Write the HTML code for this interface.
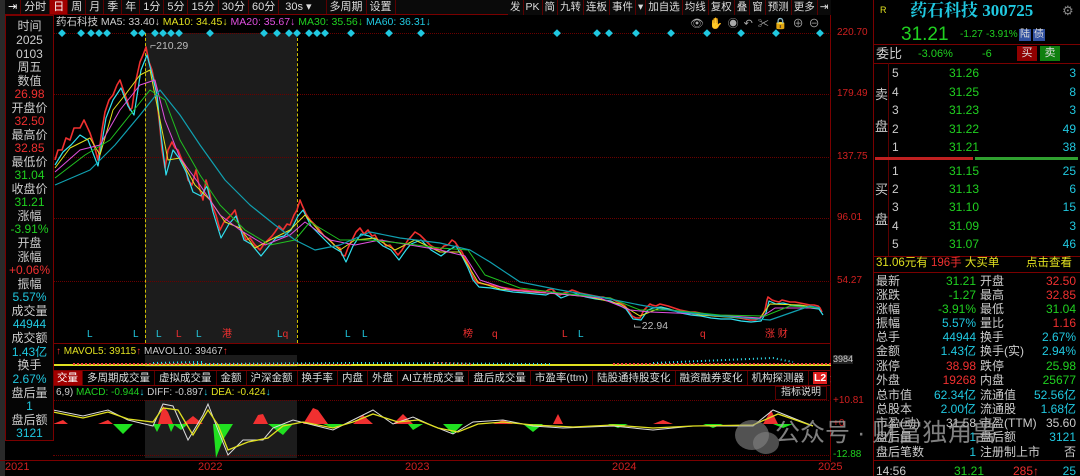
<!DOCTYPE html>
<html><head><meta charset="utf-8"><style>
*{margin:0;padding:0;box-sizing:border-box}
body{width:1080px;height:476px;background:#000;overflow:hidden;position:relative;font-family:"Liberation Sans","Noto Sans CJK SC",sans-serif;font-size:11px;color:#ccc}
.a{position:absolute;white-space:nowrap;line-height:1}
.tb{overflow:hidden}
.tb span{display:inline-block;height:15px;line-height:15px;padding:0 3px;border-right:1px solid #5a0000;color:#ddd;font-size:11px}
.tb2 span{padding:0 2px;font-size:10.5px}
.lp{position:absolute;left:5px;top:15px;width:49px;height:426px;border:1px solid #7a0000;background:#050505}
.lp div{position:absolute;left:0;width:47px;text-align:center;font-size:12px;line-height:1}
.g{color:#20d020}.r{color:#f03030}.c{color:#20c8e0}.w{color:#ccc}.y{color:#e0e020}.m{color:#e050e0}
.ax{color:#d02020;font-size:10px}
.tabs{overflow:hidden}
.tabs span{display:inline-block;height:15px;line-height:15px;padding:0 4px;border-right:1px solid #5a0000;color:#ddd;font-size:10.5px}
.rp span{position:absolute;line-height:1;font-size:12px;white-space:nowrap}
.dm{position:absolute;top:30px;font-size:8px;color:#20c8e0;line-height:1}
</style></head><body>
<div class="a" style="left:0;top:0;width:5px;height:476px;background:#2a2a2a"></div>
<div class="a tb" style="left:5px;top:0;height:15px;width:826px;border-bottom:1px solid #7a0000;background:#0a0a0a">
<span style="color:#fff">⇥</span><span>分时</span><span style="background:#a00000;color:#fff">日</span><span>周</span><span>月</span><span>季</span><span>年</span><span>1分</span><span>5分</span><span>15分</span><span>30分</span><span>60分</span><span style="padding:0 14px 0 6px">30s ▾</span><span>多周期</span><span>设置</span>
</div>
<div class="a tb tb2" style="left:508px;top:0;height:15px;width:323px;background:#0a0a0a">
<span>发</span><span>PK</span><span>简</span><span>九转</span><span>连板</span><span>事件</span><span>▾</span><span>加自选</span><span>均线</span><span>复权</span><span>叠</span><span>窗</span><span>预测</span><span>更多</span><span>⇥</span><span>▾</span>
</div>
<div class="a" style="left:53px;top:15px;width:778px;height:447px;border-right:1px solid #7a0000"></div>
<div class="a" style="left:145px;top:33px;width:152px;height:310px;background:#1c1c1c"></div>
<div class="a" style="left:145px;top:355px;width:152px;height:12px;background:#1c1c1c"></div>
<div class="a" style="left:145px;top:400px;width:152px;height:58px;background:#1c1c1c"></div>
<div class="a" style="left:145px;top:33px;height:310px;border-left:1px dashed #d0c000"></div>
<div class="a" style="left:297px;top:33px;height:310px;border-left:1px dashed #d0c000"></div>
<div class="a" style="left:53px;top:33px;width:778px;border-top:1px dotted #6a0000"></div>
<div class="a" style="left:53px;top:94px;width:778px;border-top:1px dotted #6a0000"></div>
<div class="a" style="left:53px;top:157px;width:778px;border-top:1px dotted #6a0000"></div>
<div class="a" style="left:53px;top:218px;width:778px;border-top:1px dotted #6a0000"></div>
<div class="a" style="left:53px;top:281px;width:778px;border-top:1px dotted #6a0000"></div>
<div class="a ax" style="left:837px;top:28px">220.70</div>
<div class="a ax" style="left:837px;top:89px">179.49</div>
<div class="a ax" style="left:837px;top:152px">137.75</div>
<div class="a ax" style="left:837px;top:213px">96.01</div>
<div class="a ax" style="left:837px;top:276px">54.27</div>
<div class="a" style="left:56px;top:17px;font-size:10.5px"><span class="w">药石科技</span> <span class="w">MA5: 33.40↓</span> <span class="y">MA10: 34.45↓</span> <span class="m">MA20: 35.67↓</span> <span class="g">MA30: 35.56↓</span> <span class="c">MA60: 36.31↓</span></div>
<div class="a" style="left:690px;top:19px;color:#aaa;font-size:11px;letter-spacing:5px">👁✋◉↶✂🔒⊕⊖</div>
<div class="a" style="left:55px;top:0;width:775px;height:45px;overflow:hidden">
<span class="dm" style="left:3px">◆</span><span class="dm" style="left:22px">◆</span><span class="dm" style="left:32px">◆◆◆</span><span class="dm" style="left:75px">◆</span><span class="dm" style="left:83px">◆</span><span class="dm" style="left:96px">◆◆◆◆</span><span class="dm" style="left:151px">◆</span><span class="dm" style="left:205px">◆</span><span class="dm" style="left:218px">◆</span><span class="dm" style="left:230px">◆◆</span><span class="dm" style="left:250px">◆◆◆</span><span class="dm" style="left:292px">◆</span><span class="dm" style="left:330px">◆</span><span class="dm" style="left:362px">◆</span><span class="dm" style="left:498px">◆</span><span class="dm" style="left:538px">◆</span><span class="dm" style="left:550px">◆</span><span class="dm" style="left:577px">◆</span><span class="dm" style="left:612px">◆</span><span class="dm" style="left:648px">◆</span><span class="dm" style="left:682px">◆</span><span class="dm" style="left:717px">◆</span><span class="dm" style="left:761px">◆</span>
</div>
<div class="a" style="left:150px;top:41px;color:#bbb;font-size:10.5px">⌐210.29</div>
<div class="a" style="left:633px;top:321px;color:#bbb;font-size:10.5px">⌙22.94</div>
<svg class="a" style="left:0;top:0" width="831" height="476">
<g fill="none" stroke-linejoin="round">
<polyline stroke="#f03030" stroke-width="1.6" points="55,160 58,150 62,150 66,138 70,140 74,128 80,128 84,120 90,133 94,145 98,160 102,130 105,112 109,100 113,95 117,85 120,80 124,92 127,100 130,110 132,108 136,80 140,62 143,55 146,47 149,62 152,70 154,80 156,88 158,110 160,128 162,150 165,168 168,150 172,142 175,148 178,150 182,160 185,165 188,180 192,185 196,170 200,190 203,200 206,180 209,190 212,205 216,215 220,230 224,222 228,218 232,214 235,210 239,225 243,233 246,240 250,238 255,245 260,250 264,244 268,240 272,236 275,232 279,226 283,230 287,224 290,225 294,215 297,210 300,200 302,205 306,214 310,220 314,224 318,228 324,236 330,240 335,246 340,248 342,255 345,256 348,248 352,240 356,232 360,228 364,234 368,230 372,236 375,235 379,242 382,240 386,246 390,245 394,250 398,255 402,250 405,245 408,240 410,238 415,232 420,235 425,240 430,245 435,248 440,250 444,246 448,245 452,240 455,242 459,248 462,252 465,258 467,262 470,268 472,275 475,280 478,283 484,284 490,285 495,286 500,287 506,288 512,289 518,290 525,290 530,291 535,291 540,292 545,292 548,290 552,289 556,293 560,295 564,293 568,292 572,290 575,291 580,293 585,294 590,295 595,296 600,297 603,297 606,298 610,298 614,300 618,302 622,304 625,306 628,310 632,316 636,318 640,318 644,310 647,307 650,304 652,305 656,306 660,304 664,305 668,306 674,308 680,310 685,311 690,312 695,312 700,313 705,314 710,315 715,316 720,316 725,316 730,316 735,317 740,318 745,319 750,320 755,320 760,318 763,314 765,310 767,300 768,297 772,300 775,301 779,302 782,300 786,301 790,302 795,302 800,303 805,304 810,305 814,305 818,306 820,308 822,312"/>
<polyline stroke="#30e0f0" stroke-width="1.2" points="55,165 63,152 71,145 80,135 88,140 98,166 106,118 113,100 121,88 128,106 134,115 141,70 147,55 153,78 157,95 161,135 166,175 173,150 179,158 186,172 193,192 201,196 207,186 213,212 221,238 229,224 236,216 244,240 251,244 261,256 269,246 276,238 284,236 291,230 298,216 303,210 311,226 319,234 331,246 341,252 346,262 353,246 361,234 369,236 376,240 383,246 391,250 399,260 406,250 411,244 421,240 431,250 441,256 449,250 456,246 463,258 468,268 473,280 479,287 491,288 501,290 513,292 526,293 536,294 546,295 553,292 561,298 569,295 576,294 586,297 596,299 604,300 611,301 619,305 626,309 633,319 641,320 648,310 653,308 661,307 669,309 681,313 691,315 701,316 711,318 721,319 731,319 741,321 751,322 761,321 766,313 769,301 776,304 783,303 791,305 801,306 811,308 819,309 823,315"/>
<polyline stroke="#e0e020" stroke-width="1" points="55,168 70,148 90,138 100,155 113,110 125,95 140,75 150,70 158,110 168,160 180,158 195,185 210,200 225,222 240,228 255,248 270,240 290,230 305,215 320,232 340,250 355,240 375,238 395,250 415,240 440,252 460,252 478,282 500,289 530,292 560,294 590,297 620,304 640,316 660,308 700,315 740,318 760,318 770,304 800,305 820,308"/>
<polyline stroke="#e050e0" stroke-width="1" points="55,172 80,150 100,145 120,110 140,85 155,80 165,120 180,158 200,185 220,215 240,230 265,245 290,235 305,222 330,240 355,245 380,240 410,245 440,250 465,256 480,280 510,290 560,294 600,298 630,310 650,312 700,314 760,318 775,308 820,308"/>
<polyline stroke="#20c020" stroke-width="1" points="55,178 85,155 110,140 130,115 150,90 165,100 180,140 200,175 220,205 245,230 270,245 295,240 310,222 340,240 370,240 400,243 440,248 468,250 485,275 520,288 560,293 610,298 640,310 670,310 720,315 765,316 790,306 820,308"/>
<polyline stroke="#10a0b0" stroke-width="1.2" points="55,185 90,170 115,145 140,115 160,90 180,115 200,145 225,180 250,205 275,225 295,240 315,250 340,245 370,232 400,238 440,243 470,250 490,262 520,282 560,290 600,297 640,305 680,312 720,316 770,320 810,306 820,308"/>
</g>
</svg>
<div class="a" style="left:53px;top:343px;width:778px;border-top:1px solid #7a0000"></div>
<div class="a c" style="left:87px;top:330px;font-size:10px">L</div>
<div class="a c" style="left:133px;top:330px;font-size:10px">L</div>
<div class="a c" style="left:156px;top:330px;font-size:10px">L</div>
<div class="a r" style="left:176px;top:330px;font-size:10px">L</div>
<div class="a c" style="left:196px;top:330px;font-size:10px">L</div>
<div class="a r" style="left:222px;top:330px;font-size:10px">港</div>
<div class="a c" style="left:277px;top:330px;font-size:10px">L<span class="r">q</span></div>
<div class="a c" style="left:345px;top:330px;font-size:10px">L</div>
<div class="a c" style="left:362px;top:330px;font-size:10px">L</div>
<div class="a r" style="left:463px;top:330px;font-size:10px">榜</div>
<div class="a r" style="left:492px;top:330px;font-size:10px">q</div>
<div class="a r" style="left:562px;top:330px;font-size:10px">L</div>
<div class="a c" style="left:578px;top:330px;font-size:10px">L</div>
<div class="a r" style="left:700px;top:330px;font-size:10px">q</div>
<div class="a r" style="left:765px;top:330px;font-size:10px">涨 财</div>
<div class="a" style="left:56px;top:347px;font-size:10px"><span class="r">↑</span> <span class="y">MAVOL5: 39115</span><span class="r">↑</span> <span class="w">MAVOL10: 39467</span><span class="r">↑</span></div>
<svg class="a" style="left:53px;top:354px" width="778" height="12"><path d="M0 11 L778 11" stroke="#e0e020" stroke-width="2"/><path d="M20 10 L300 10 M380 9 L420 10 M560 10 L778 10" stroke="#f04040" stroke-width="2" stroke-dasharray="2 2"/><path d="M100 9 L150 8 M140 10 L300 9 L500 10 M600 9 L720 4 L740 8" stroke="#30e0f0" stroke-width="2" stroke-dasharray="1 3"/></svg>
<div class="a" style="left:833px;top:355px;font-size:9px;color:#ccc;background:#222">3984</div>
<div class="a tabs" style="left:53px;top:370px;border-top:1px solid #7a0000;border-bottom:1px solid #7a0000;height:16px;width:778px">
<span style="background:#a00000;color:#fff">交量</span><span>多周期成交量</span><span>虚拟成交量</span><span>金额</span><span>沪深金额</span><span>换手率</span><span>内盘</span><span>外盘</span><span>AI立桩成交量</span><span>盘后成交量</span><span>市盈率(ttm)</span><span>陆股通持股变化</span><span>融资融券变化</span><span>机构探测器</span><span><b style="background:#e02020;color:#fff;padding:0 1px">L2</b> 资金抄底</span>
</div>
<div class="a" style="left:56px;top:388px;font-size:10px"><span class="w">6,9)</span> <span class="g">MACD: -0.944</span><span class="c">↓</span> <span class="w">DIFF: -0.897</span><span class="c">↓</span> <span class="y">DEA: -0.424</span><span class="c">↓</span></div>
<div class="a" style="left:775px;top:386px;height:14px;border:1px solid #5a0000;padding:1px 5px;font-size:10px;color:#ddd">指标说明</div>
<div class="a" style="left:53px;top:400px;width:778px;border-top:1px dotted #6a0000"></div>
<div class="a" style="left:53px;top:455px;width:778px;border-top:1px dotted #6a0000"></div>
<svg class="a" style="left:53px;top:400px" width="778" height="60">
<path d="M0 24 L5 22 L10 20 L15 24 Z M45 24 L55 20 L60 24Z M105 24 L110 6 L115 12 L120 24Z M130 24 L140 16 L150 24Z M200 24 L205 15 L210 14 L215 24Z M250 24 L260 8 L265 10 L275 24Z M300 24 L310 15 L320 24Z M340 24 L350 14 L360 24Z M440 24 L450 20 L460 24Z M500 24 L505 14 L510 24Z M600 24 L610 20 L620 24 Z M710 24 L718 10 L725 24Z" fill="#f03030"/>
<path d="M60 24 L70 34 L80 24Z M100 24 L104 32 L108 24Z M215 24 L230 35 L240 24Z M115 24 L118 32 L122 24Z M270 24 L280 28 L290 24Z M355 24 L360 30 L370 24Z M390 24 L400 34 L410 24Z M470 24 L480 32 L490 24Z M555 24 L565 28 L575 24Z M650 24 L660 28 L670 24Z M720 24 L730 28 L740 24Z M150 24 L160 24 L163 58 L170 40 L180 24Z M120 24 L128 30 L135 24Z" fill="#20e020"/>
<polyline fill="none" stroke="#ddd" stroke-width="1" points="0,10 30,16 55,10 75,20 100,26 110,4 120,6 135,40 150,15 155,4 165,30 175,55 190,40 210,40 220,28 240,20 260,25 280,30 300,20 320,10 340,24 360,17 380,26 400,34 420,22 450,20 480,26 510,28 560,26 600,30 640,26 700,26 720,10 760,26"/>
<polyline fill="none" stroke="#e0e020" stroke-width="1.3" points="0,12 30,18 55,12 75,19 100,22 110,8 125,10 140,35 155,10 165,25 175,50 195,42 215,38 230,26 250,22 280,28 300,22 320,14 345,22 365,20 385,28 405,32 425,24 450,22 480,25 520,27 560,25 600,28 640,26 700,25 725,14 760,26"/>
</svg>
<div class="a" style="left:833px;top:396px;color:#d02020;font-size:10px">+10.81</div>
<div class="a" style="left:833px;top:419px;color:#d02020;font-size:10px">+0</div>
<div class="a" style="left:833px;top:450px;color:#20d020;font-size:10px">-12.88</div>
<div class="a" style="left:0;top:460px;width:831px;border-top:1px solid #7a0000"></div>
<div class="a ax" style="left:5px;top:462px;font-size:11px">2021</div>
<div class="a ax" style="left:198px;top:462px;font-size:11px">2022</div>
<div class="a ax" style="left:405px;top:462px;font-size:11px">2023</div>
<div class="a ax" style="left:612px;top:462px;font-size:11px">2024</div>
<div class="a ax" style="left:818px;top:462px;font-size:11px">2025</div>
<div class="lp">
<div class="w" style="top:4px">时间</div><div class="w" style="top:18px">2025</div><div class="w" style="top:32px">0103</div><div class="w" style="top:45px">周五</div><div class="w" style="top:59px">数值</div><div class="r" style="top:72px">26.98</div>
<div class="w" style="top:86px">开盘价</div><div class="r" style="top:99px">32.50</div><div class="w" style="top:113px">最高价</div><div class="r" style="top:126px">32.85</div><div class="w" style="top:140px">最低价</div><div class="g" style="top:153px">31.04</div><div class="w" style="top:167px">收盘价</div><div class="g" style="top:180px">31.21</div><div class="w" style="top:194px">涨幅</div><div class="g" style="top:207px">-3.91%</div><div class="w" style="top:221px">开盘</div><div class="w" style="top:235px">涨幅</div><div class="r" style="top:248px">+0.06%</div><div class="w" style="top:262px">振幅</div><div class="c" style="top:275px">5.57%</div><div class="w" style="top:289px">成交量</div><div class="c" style="top:302px">44944</div><div class="w" style="top:316px">成交额</div><div class="c" style="top:330px">1.43亿</div><div class="w" style="top:343px">换手</div><div class="c" style="top:357px">2.67%</div><div class="w" style="top:371px">盘后量</div><div class="c" style="top:384px">1</div><div class="w" style="top:398px">盘后额</div><div class="c" style="top:411px">3121</div>
</div>
<div class="a rp" style="left:873px;top:0;width:207px;height:476px;border-left:1px solid #7a0000;background:#000;overflow:hidden">
<span class="y" style="left:6px;top:6px;font-size:9px">R</span>
<span class="c" style="left:36px;top:2px;font-size:17px;font-weight:bold;font-family:'Liberation Serif','Noto Serif CJK SC',serif">药石科技 300725</span>
<span style="left:188px;top:4px;color:#888;font-size:13px">⚙</span>
<span class="g" style="left:27px;top:25px;font-size:19px">31.21</span>
<span class="g" style="left:86px;top:30px;font-size:10px">-1.27</span>
<span class="g" style="left:112px;top:30px;font-size:10px">-3.91%</span>
<span style="left:145px;top:29px;font-size:10px;background:#3050a0;color:#ddd;padding:1px">陆</span>
<span style="left:159px;top:29px;font-size:10px;background:#3050a0;color:#ddd;padding:1px">债</span>
<div style="position:absolute;left:0;top:44px;width:207px;border-top:1px solid #7a0000"></div>
<span class="w" style="left:2px;top:47px;font-size:13px">委比</span>
<span class="g" style="left:44px;top:49px;font-size:11px">-3.06%</span>
<span class="g" style="left:108px;top:49px;font-size:11px">-6</span>
<span style="left:143px;top:46px;width:20px;height:15px;background:#900000;color:#ddd;font-size:11px;text-align:center;line-height:15px">买</span>
<span style="left:166px;top:46px;width:20px;height:15px;background:#108010;color:#ddd;font-size:11px;text-align:center;line-height:15px">卖</span>
<div style="position:absolute;left:0;top:63px;width:207px;border-top:1px solid #7a0000"></div>
<div style="position:absolute;left:14px;top:63px;height:193px;border-left:1px solid #5a0000"></div>
<span class="w" style="left:1px;top:88px;font-size:13px">卖</span><span class="w" style="left:1px;top:120px;font-size:13px">盘</span>
<span class="w" style="left:18px;top:67px">5</span><span class="g" style="left:75px;top:67px">31.26</span><span class="c" style="right:4px;top:67px">3</span>
<span class="w" style="left:18px;top:86px">4</span><span class="g" style="left:75px;top:86px">31.25</span><span class="c" style="right:4px;top:86px">8</span>
<span class="w" style="left:18px;top:104px">3</span><span class="g" style="left:75px;top:104px">31.23</span><span class="c" style="right:4px;top:104px">3</span>
<span class="w" style="left:18px;top:123px">2</span><span class="g" style="left:75px;top:123px">31.22</span><span class="c" style="right:4px;top:123px">49</span>
<span class="w" style="left:18px;top:141px">1</span><span class="g" style="left:75px;top:141px">31.21</span><span class="c" style="right:4px;top:141px">38</span>
<div style="position:absolute;left:1px;top:157px;width:98px;height:3px;background:#c02020"></div>
<div style="position:absolute;left:101px;top:157px;width:103px;height:3px;background:#30a030"></div>
<span class="w" style="left:1px;top:183px;font-size:13px">买</span><span class="w" style="left:1px;top:213px;font-size:13px">盘</span>
<span class="w" style="left:18px;top:165px">1</span><span class="g" style="left:75px;top:165px">31.15</span><span class="c" style="right:4px;top:165px">25</span>
<span class="w" style="left:18px;top:183px">2</span><span class="g" style="left:75px;top:183px">31.13</span><span class="c" style="right:4px;top:183px">6</span>
<span class="w" style="left:18px;top:201px">3</span><span class="g" style="left:75px;top:201px">31.10</span><span class="c" style="right:4px;top:201px">15</span>
<span class="w" style="left:18px;top:220px">4</span><span class="g" style="left:75px;top:220px">31.09</span><span class="c" style="right:4px;top:220px">3</span>
<span class="w" style="left:18px;top:238px">5</span><span class="g" style="left:75px;top:238px">31.07</span><span class="c" style="right:4px;top:238px">46</span>
<div style="position:absolute;left:0;top:256px;width:207px;border-top:1px solid #7a0000"></div>
<span class="y" style="left:2px;top:258px;font-size:11.5px">31.06元有 <b class="r" style="font-weight:normal">196手</b> 大买单</span>
<span class="y" style="left:152px;top:258px;font-size:11.5px">点击查看</span>
<div style="position:absolute;left:0;top:272px;width:207px;border-top:1px solid #7a0000"></div>
<span class="w" style="left:2px;top:275px">最新</span><span class="g" style="right:104px;top:275px">31.21</span><span class="w" style="left:106px;top:275px">开盘</span><span class="r" style="right:4px;top:275px">32.50</span>
<span class="w" style="left:2px;top:289px">涨跌</span><span class="g" style="right:104px;top:289px">-1.27</span><span class="w" style="left:106px;top:289px">最高</span><span class="r" style="right:4px;top:289px">32.85</span>
<span class="w" style="left:2px;top:303px">涨幅</span><span class="g" style="right:104px;top:303px">-3.91%</span><span class="w" style="left:106px;top:303px">最低</span><span class="g" style="right:4px;top:303px">31.04</span>
<span class="w" style="left:2px;top:317px">振幅</span><span class="c" style="right:104px;top:317px">5.57%</span><span class="w" style="left:106px;top:317px">量比</span><span class="r" style="right:4px;top:317px">1.16</span>
<span class="w" style="left:2px;top:331px">总手</span><span class="c" style="right:104px;top:331px">44944</span><span class="w" style="left:106px;top:331px">换手</span><span class="c" style="right:4px;top:331px">2.67%</span>
<span class="w" style="left:2px;top:345px">金额</span><span class="c" style="right:104px;top:345px">1.43亿</span><span class="w" style="left:106px;top:345px">换手(实)</span><span class="c" style="right:4px;top:345px">2.94%</span>
<span class="w" style="left:2px;top:360px">涨停</span><span class="r" style="right:104px;top:360px">38.98</span><span class="w" style="left:106px;top:360px">跌停</span><span class="g" style="right:4px;top:360px">25.98</span>
<span class="w" style="left:2px;top:374px">外盘</span><span class="r" style="right:104px;top:374px">19268</span><span class="w" style="left:106px;top:374px">内盘</span><span class="g" style="right:4px;top:374px">25677</span>
<span class="w" style="left:2px;top:389px">总市值</span><span class="c" style="right:104px;top:389px">62.34亿</span><span class="w" style="left:106px;top:389px">流通值</span><span class="c" style="right:4px;top:389px">52.56亿</span>
<span class="w" style="left:2px;top:403px">总股本</span><span class="c" style="right:104px;top:403px">2.00亿</span><span class="w" style="left:106px;top:403px">流通股</span><span class="c" style="right:4px;top:403px">1.68亿</span>
<span class="w" style="left:2px;top:417px">市盈(动)</span><span class="w" style="right:104px;top:417px">31.58</span><span class="w" style="left:106px;top:417px">市盈(TTM)</span><span class="w" style="right:4px;top:417px">35.60</span>
<span class="w" style="left:2px;top:431px">盘后量</span><span class="c" style="right:104px;top:431px">1</span><span class="w" style="left:106px;top:431px">盘后额</span><span class="c" style="right:4px;top:431px">3121</span>
<span class="w" style="left:2px;top:446px">盘后笔数</span><span class="c" style="right:104px;top:446px">1</span><span class="w" style="left:106px;top:446px">注册制上市</span><span class="w" style="right:4px;top:446px">否</span>
<div style="position:absolute;left:0;top:460px;width:207px;border-top:1px solid #7a0000"></div>
<span class="w" style="left:2px;top:465px">14:56</span><span class="g" style="left:80px;top:465px">31.21</span><span class="r" style="left:139px;top:465px">285↑</span><span class="c" style="right:4px;top:465px">25</span>
</div>
<div class="a" style="left:735px;top:420px;width:34px;height:30px;border-radius:50%;background:rgba(150,150,150,0.55)"></div>
<div class="a" style="left:753px;top:432px;width:26px;height:22px;border-radius:50%;background:rgba(130,130,130,0.6)"></div>
<div class="a" style="left:775px;top:421px;font-size:25px;color:rgba(170,170,170,0.75)">公众号 · 财富独角兽</div>
</body></html>
